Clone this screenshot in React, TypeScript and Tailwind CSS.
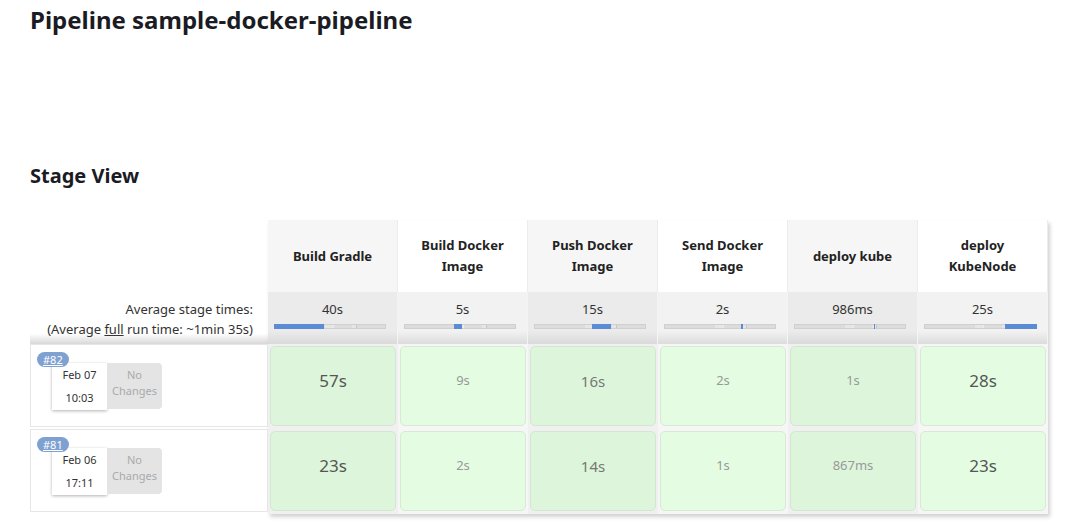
import * as React from 'react';

type Stage = {
  name: string[];
  avg: string;
  shaded: boolean;
  bar: [number, number];
};

const stages: Stage[] = [
  { name: ['Build Gradle'], avg: '40s', shaded: true, bar: [0, 50] },
  { name: ['Build Docker', 'Image'], avg: '5s', shaded: false, bar: [50, 8] },
  { name: ['Push Docker', 'Image'], avg: '15s', shaded: true, bar: [58, 19] },
  { name: ['Send Docker', 'Image'], avg: '2s', shaded: false, bar: [77, 2] },
  { name: ['deploy kube'], avg: '986ms', shaded: true, bar: [80, 1] },
  { name: ['deploy', 'KubeNode'], avg: '25s', shaded: false, bar: [81, 32] },
];

type Size = 'lg' | 'md' | 'sm';

const builds: {
  id: string;
  date: string;
  time: string;
  cells: { v: string; s: Size }[];
}[] = [
  {
    id: '#82',
    date: 'Feb 07',
    time: '10:03',
    cells: [
      { v: '57s', s: 'lg' },
      { v: '9s', s: 'sm' },
      { v: '16s', s: 'md' },
      { v: '2s', s: 'sm' },
      { v: '1s', s: 'sm' },
      { v: '28s', s: 'lg' },
    ],
  },
  {
    id: '#81',
    date: 'Feb 06',
    time: '17:11',
    cells: [
      { v: '23s', s: 'lg' },
      { v: '2s', s: 'sm' },
      { v: '14s', s: 'md' },
      { v: '1s', s: 'sm' },
      { v: '867ms', s: 'sm' },
      { v: '23s', s: 'lg' },
    ],
  },
];

const sizeClass: Record<Size, string> = {
  lg: 'text-[17px] text-[#555]',
  md: 'text-[15px] text-[#777]',
  sm: 'text-[13px] text-[#999]',
};

function AvgBar({ bar }: { bar: [number, number] }) {
  return (
    <div className="relative ml-[6px] mr-[11px] h-[5px] bg-[#dcdcdc] border border-[#d0d0d0]">
      {/* faint ticks */}
      <div className="absolute top-0 bottom-0 left-[50px] w-[8px] bg-[#e6e6e6]" />
      <div className="absolute top-0 bottom-0 left-[58px] w-px bg-[#eeeeee]" />
      <div className="absolute top-0 bottom-0 left-[77px] w-[4px] bg-[#e6e6e6]" />
      <div className="absolute top-0 bottom-0 left-[81px] w-px bg-[#c4c4c4]" />
      <div
        className="absolute -top-px -bottom-px bg-[#5b8bd4]"
        style={{ left: bar[0] - 1, width: bar[1] }}
      />
    </div>
  );
}

function BuildLabel({ id, date, time }: { id: string; date: string; time: string }) {
  return (
    <div className="relative mb-[2px] h-[83px] border border-[#e6e6e6] bg-white">
      <span className="absolute left-[6px] top-[7px] z-10 rounded-full bg-[#7fa1d1] px-[6px] text-[11px] leading-[15px] text-white underline">
        {id}
      </span>
      <div className="absolute left-[21px] top-[18px] flex">
        <div className="flex h-[47px] w-[55px] flex-col items-center bg-white pt-[4px] text-[11px] text-[#333] shadow-[0_1px_3px_rgba(0,0,0,0.3)]">
          <span className="leading-[16px]">{date}</span>
          <span className="mt-[7px] leading-[16px]">{time}</span>
        </div>
        <div className="flex h-[46px] w-[55px] flex-col items-center rounded-r-[4px] bg-[#e4e4e4] pt-[4px] text-[11px] leading-[16px] text-[#aaa]">
          <span>No</span>
          <span>Changes</span>
        </div>
      </div>
    </div>
  );
}

export default function App() {
  return (
    <div className="min-h-[528px] bg-white pl-[30px] pt-[5px] font-['Noto_Sans',sans-serif] text-[#333]">
      <h1 className="text-[24px] font-bold leading-[30px] text-[#1b1b24]">
        Pipeline sample-docker-pipeline
      </h1>
      <h2 className="mt-[129px] text-[20px] font-bold leading-[24px] text-[#1b1b24]">
        Stage View
      </h2>

      <div className="mt-[32px] flex">
        {/* left column */}
        <div className="w-[238px] shrink-0">
          <div className="h-[72px]" />
          <div className="h-[52px] bg-[linear-gradient(to_bottom,#fff_80%,#d8d8d8)] pr-[15px] pt-[7px] text-right text-[13px] leading-[20px] text-[#333]">
            <div>Average stage times:</div>
            <div>
              (Average <span className="underline">full</span> run time: ~1min 35s)
            </div>
          </div>
          {builds.map((b) => (
            <BuildLabel key={b.id} id={b.id} date={b.date} time={b.time} />
          ))}
        </div>

        {/* stages */}
        <div className="grid grid-cols-[repeat(6,130px)] shadow-[2px_3px_4px_rgba(0,0,0,0.18)]">
          {stages.map((s, i) => (
            <div key={i} className={s.shaded ? 'bg-[#f0f0f0]' : 'bg-[#f6f6f6]'}>
              <div
                className={`flex h-[72px] flex-col items-center justify-center border-r border-[#ececec] text-[13px] font-bold leading-[21px] text-[#222] ${
                  s.shaded ? 'bg-[#f6f6f6]' : 'bg-white'
                }`}
              >
                {s.name.map((n) => (
                  <span key={n}>{n}</span>
                ))}
              </div>
              <div
                className={`h-[52px] border-r border-[#f4f4f4] pt-[7px] ${
                  s.shaded
                    ? 'bg-[linear-gradient(to_bottom,#ebebeb_75%,#dadada)]'
                    : 'bg-[linear-gradient(to_bottom,#f2f2f2_75%,#dcdcdc)]'
                }`}
              >
                <div className="text-center text-[13px] leading-[20px] text-[#333]">{s.avg}</div>
                <div className="mt-[5px]">
                  <AvgBar bar={s.bar} />
                </div>
              </div>
              {builds.map((b) => {
                const c = b.cells[i];
                return (
                  <div key={b.id} className="h-[85px] px-[2px] pt-[2px]">
                    <div
                      className={`flex h-[80px] items-center justify-center rounded-[5px] border pb-[10px] ${
                        s.shaded
                          ? 'border-[#d3e6d1] bg-[#ddf6db]'
                          : 'border-[#d6ead4] bg-[#e4fde2]'
                      } ${sizeClass[c.s]}`}
                    >
                      {c.v}
                    </div>
                  </div>
                );
              })}
            </div>
          ))}
        </div>
      </div>
    </div>
  );
}
